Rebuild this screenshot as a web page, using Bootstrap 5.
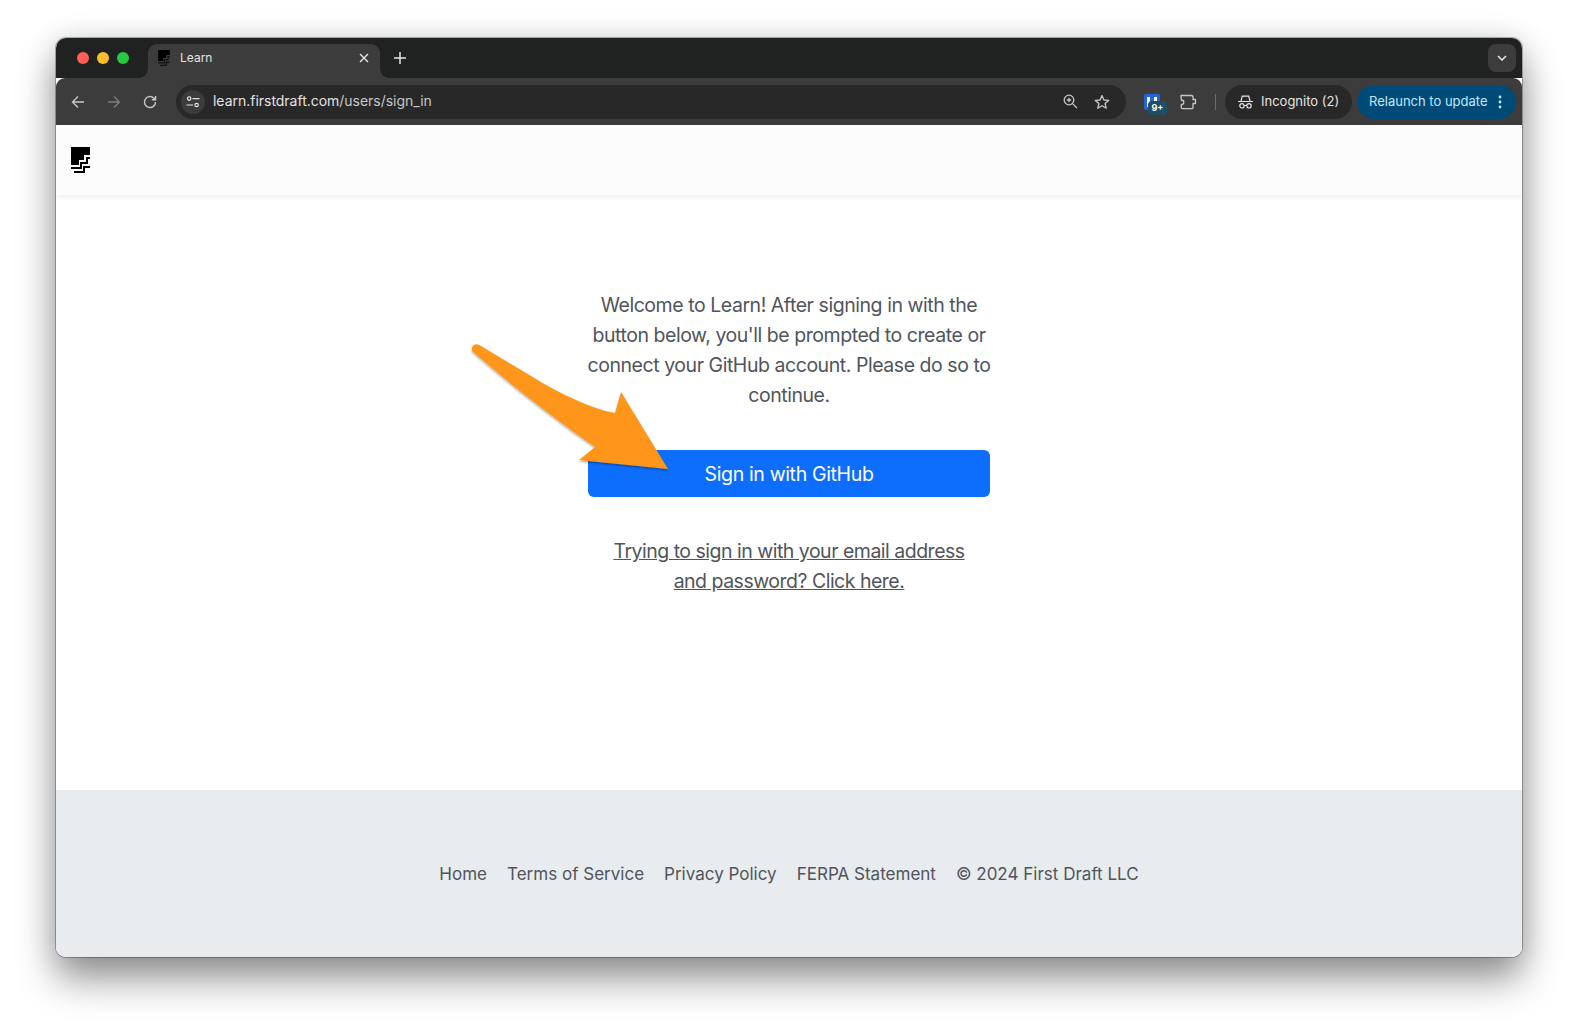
<!DOCTYPE html>
<html lang="en">
<head>
<meta charset="utf-8">
<title>Learn</title>
<link href="https://cdn.jsdelivr.net/npm/bootstrap@5.3.0/dist/css/bootstrap.min.css" rel="stylesheet">
<style>
html,body{height:100%;}
body{background:#fff;font-family:Inter,"Liberation Sans",sans-serif;overflow:hidden;color:#4f555b;}
.win{position:relative;width:1466px;height:919px;border-radius:10px;overflow:hidden;background:#fff;}
.win-shadow{width:1466px;height:919px;margin:38px 0 0 56px;border-radius:10px;box-shadow:0 0 0 1px rgba(0,0,0,.28),0 22px 38px rgba(0,0,0,.42),0 0 30px rgba(0,0,0,.12);}
.strip{height:40px;background:#202222;padding-left:21px;padding-right:6px;}
.lights{gap:8px;width:71px;margin-top:14px;}
.light{width:12px;height:12px;border-radius:50%;}
.l-red{background:#ff5f57;}
.l-yel{background:#febc2e;}
.l-grn{background:#28c840;}
.tabx{position:relative;width:232px;height:34px;margin-top:6px;background:#3c3c3c;border-radius:9px 9px 0 0;color:#e3e3e3;font-size:12px;padding:0 11px 6px 10px;}
.tabx::before,.tabx::after{content:"";position:absolute;bottom:0;width:9px;height:9px;}
.tabx::before{left:-9px;background:radial-gradient(circle at 0 0,#202222 8.5px,#3c3c3c 9px);}
.tabx::after{right:-9px;background:radial-gradient(circle at 100% 0,#202222 8.5px,#3c3c3c 9px);}
.tabx .ttl{margin-left:10px;}
.plus{margin-left:14px;margin-top:14px;}
.chev{width:28px;height:28px;background:#3c3c3c;border-radius:8px;margin-top:6px;}
.tbar{height:47px;background:#3c3c3c;border-radius:9px 9px 0 0;padding:0 6px 0 0;}
.nbtn{width:36px;}
.ubar{width:950px;height:34px;margin-left:8px;background:#282828;border-radius:17px;padding:0 16px 0 5px;color:#e3e3e3;font-size:14px;letter-spacing:-.02px;}
.ubar .path{color:#c7c7c7;}
.urltxt{padding-bottom:3px;}
.tune{width:24px;height:24px;border-radius:50%;background:#3c3c3c;margin-right:8px;}
.ico-slot{width:32px;}
.slot-ext{margin-left:10px;}
.badge9{position:absolute;left:12px;top:7px;background:#1f4f63;color:#fff;font-size:9px;font-weight:700;border-radius:4px;padding:0 3.5px;line-height:14px;}
.sep{width:1px;height:16px;background:#6b6b6b;margin:0 9px 0 11px;}
.pill{height:34px;border-radius:17px;font-size:13px;}
.pill-inc{width:127px;background:#282828;color:#e3e3e3;padding-left:13px;}
.pill-rel{width:159px;background:#004a77;color:#c2e7ff;padding-left:12px;padding-right:14px;margin-left:5px;}
.topnav{height:70px;background:#fcfcfc;box-shadow:0 2px 5px rgba(0,0,0,.08);padding-left:15px;position:relative;}
.mainarea{height:595px;padding-top:95px;}
.col402{width:402px;margin:0 auto;text-align:center;font-size:19.5px;line-height:30px;letter-spacing:-.45px;}
.col402 p{margin:0 -5px;}
.signbtn{display:block;width:100%;height:47px;margin-top:40px;background:#0d6efd;color:#fff;font-size:19.5px;letter-spacing:-.35px;line-height:35px;border-radius:6px;}
.emaillink{display:block;margin-top:39px;color:#4f555b;letter-spacing:-.5px;}
.foot{height:167px;background:#e9ecef;font-size:17.03px;gap:20px;padding-top:3px;}
.foot a{color:#4f555b;text-decoration:none;}
.arrow{position:absolute;left:0;top:0;width:1466px;height:919px;pointer-events:none;}
</style>
</head>
<body>
<div class="win-shadow">
<div class="win">
  <div class="strip d-flex align-items-start">
    <div class="lights d-flex"><div class="light l-red"></div><div class="light l-yel"></div><div class="light l-grn"></div></div>
    <div class="tabx d-flex align-items-center">
      <svg width="12" height="16" viewBox="0 0 19 26"><path fill="#000" d="M0 0H19V8H13V13H8V18H0Z"/><path fill="none" stroke="#111" stroke-width="2" d="M0 21H10V16H16V11H19M3 25H13V20H19"/></svg>
      <span class="ttl flex-grow-1">Learn</span>
      <svg width="10" height="10" viewBox="0 0 10 10"><path d="M1 1L9 9M9 1L1 9" stroke="#e3e3e3" stroke-width="1.4"/></svg>
    </div>
    <svg class="plus" width="12" height="12" viewBox="0 0 12 12"><path d="M6 0V12M0 6H12" stroke="#e3e3e3" stroke-width="1.5"/></svg>
    <div class="chev ms-auto d-flex align-items-center justify-content-center">
      <svg width="10" height="6" viewBox="0 0 10 6"><path d="M1 1L5 5L9 1" fill="none" stroke="#e3e3e3" stroke-width="1.6"/></svg>
    </div>
  </div>
  <div class="tbar d-flex align-items-center">
    <div class="nbtn d-flex justify-content-center ms-1"><svg width="14" height="14" viewBox="0 0 14 14"><path d="M13 7H2M7 1.5L1.5 7L7 12.5" fill="none" stroke="#c7c7c7" stroke-width="1.4"/></svg></div>
    <div class="nbtn d-flex justify-content-center"><svg width="14" height="14" viewBox="0 0 14 14"><path d="M1 7H12M7 1.5L12.5 7L7 12.5" fill="none" stroke="#7d7d7d" stroke-width="1.4"/></svg></div>
    <div class="nbtn d-flex justify-content-center"><svg width="14" height="14" viewBox="0 0 14 14"><path d="M12.5 7A5.5 5.5 0 1 1 10.6 2.9L12.5 4.6M12.6 1V4.8H8.8" fill="none" stroke="#c7c7c7" stroke-width="1.4"/></svg></div>
    <div class="ubar d-flex align-items-center">
      <div class="tune d-flex align-items-center justify-content-center"><svg width="14" height="12" viewBox="0 0 14 12"><g fill="none" stroke="#e3e3e3" stroke-width="1.2"><circle cx="3.2" cy="2.6" r="1.7"/><path d="M6.5 2.6H13.5M.5 9H7"/><circle cx="10.6" cy="9" r="1.7"/></g></svg></div>
      <span class="urltxt">learn.firstdraft.com<span class="path">/users/sign_in</span></span>
      <svg class="ms-auto" width="15" height="15" viewBox="0 0 15 15" fill="none" stroke="#c7c7c7" stroke-width="1.3"><circle cx="6" cy="6" r="4.8"/><path d="M9.6 9.6L14 14M3.8 6H8.2M6 3.8V8.2"/></svg>
      <svg class="ms-3" width="16" height="16" viewBox="0 0 16 16"><path d="M8 1.6L9.9 6L14.7 6.4L11.1 9.5L12.2 14.2L8 11.7L3.8 14.2L4.9 9.5L1.3 6.4L6.1 6Z" fill="none" stroke="#c7c7c7" stroke-width="1.3" stroke-linejoin="round"/></svg>
    </div>
    <div class="ico-slot slot-ext d-flex justify-content-center position-relative">
      <svg width="16" height="16" viewBox="0 0 16 16"><rect width="16" height="16" rx="2" fill="#2563d9"/><rect x="3" y="3" width="10" height="10" fill="#fff"/><rect x="6" y="3" width="4" height="6" fill="#2563d9"/></svg>
      <span class="badge9">9+</span>
    </div>
    <div class="ico-slot d-flex justify-content-center ms-1">
      <svg width="17" height="16" viewBox="0 0 17 16"><path d="M1 1.5H11.5C12.6 1.5 13 2 13 3V5.5H15.5V9.5H13V13.5C13 14.3 12.6 14.7 11.8 14.7H2.5C1.7 14.7 1.3 14.3 1.3 13.5V10.5C3 10.5 3.8 9.7 3.8 8.2C3.8 6.8 3 6 1.3 6Z" fill="none" stroke="#c7c7c7" stroke-width="1.3" stroke-linejoin="round"/></svg>
    </div>
    <div class="sep"></div>
    <div class="pill pill-inc d-flex align-items-center">
      <svg width="15" height="14" viewBox="0 0 15 14" fill="none" stroke="#e3e3e3" stroke-width="1.2"><path d="M0 6.5H15M3 6L4.3 1.2H10.7L12 6"/><circle cx="4" cy="10.8" r="2.2"/><circle cx="11" cy="10.8" r="2.2"/><path d="M6.2 10.5H8.8"/></svg>
      <span class="ms-2">Incognito (2)</span>
    </div>
    <div class="pill pill-rel d-flex align-items-center justify-content-between">
      <span>Relaunch to update</span>
      <svg width="4" height="14" viewBox="0 0 4 14"><g fill="#c2e7ff"><circle cx="2" cy="2" r="1.4"/><circle cx="2" cy="7" r="1.4"/><circle cx="2" cy="12" r="1.4"/></g></svg>
    </div>
  </div>
  <div class="topnav d-flex align-items-center">
    <svg width="19" height="26" viewBox="0 0 19 26"><path fill="#000" d="M0 0H19V8H13V13H8V18H0Z"/><path fill="none" stroke="#000" stroke-width="2" d="M0 21H10V16H16V11H19M3 25H13V20H19"/></svg>
  </div>
  <div class="mainarea">
    <div class="col402">
      <p>Welcome to Learn! After signing in with the button below, you'll be prompted to create or connect your GitHub account. Please do so to continue.</p>
      <a href="#" class="btn signbtn">Sign in with GitHub</a>
      <a href="#" class="emaillink">Trying to sign in with your email address<br>and password? Click here.</a>
    </div>
  </div>
  <div class="foot d-flex align-items-center justify-content-center">
    <a href="#">Home</a><a href="#">Terms of Service</a><a href="#">Privacy Policy</a><a href="#">FERPA Statement</a><span>© 2024 First Draft LLC</span>
  </div>
  <svg class="arrow" viewBox="0 0 1466 919">
    <defs><filter id="as" x="-10%" y="-10%" width="120%" height="130%"><feDropShadow dx="0" dy="1.5" stdDeviation="1.2" flood-color="#000" flood-opacity=".35"/></filter></defs>
    <path filter="url(#as)" fill="#fe961d" d="M418 307Q421 305 425 308L490 347C512 359 537 371 559 375L565 354L612 431L523 422L539 409C500 382 455 347 416 313Q415 309 418 307Z"/>
  </svg>
</div>
</div>
<script src="https://cdn.jsdelivr.net/npm/bootstrap@5.3.0/dist/js/bootstrap.bundle.min.js"></script>
</body>
</html>
